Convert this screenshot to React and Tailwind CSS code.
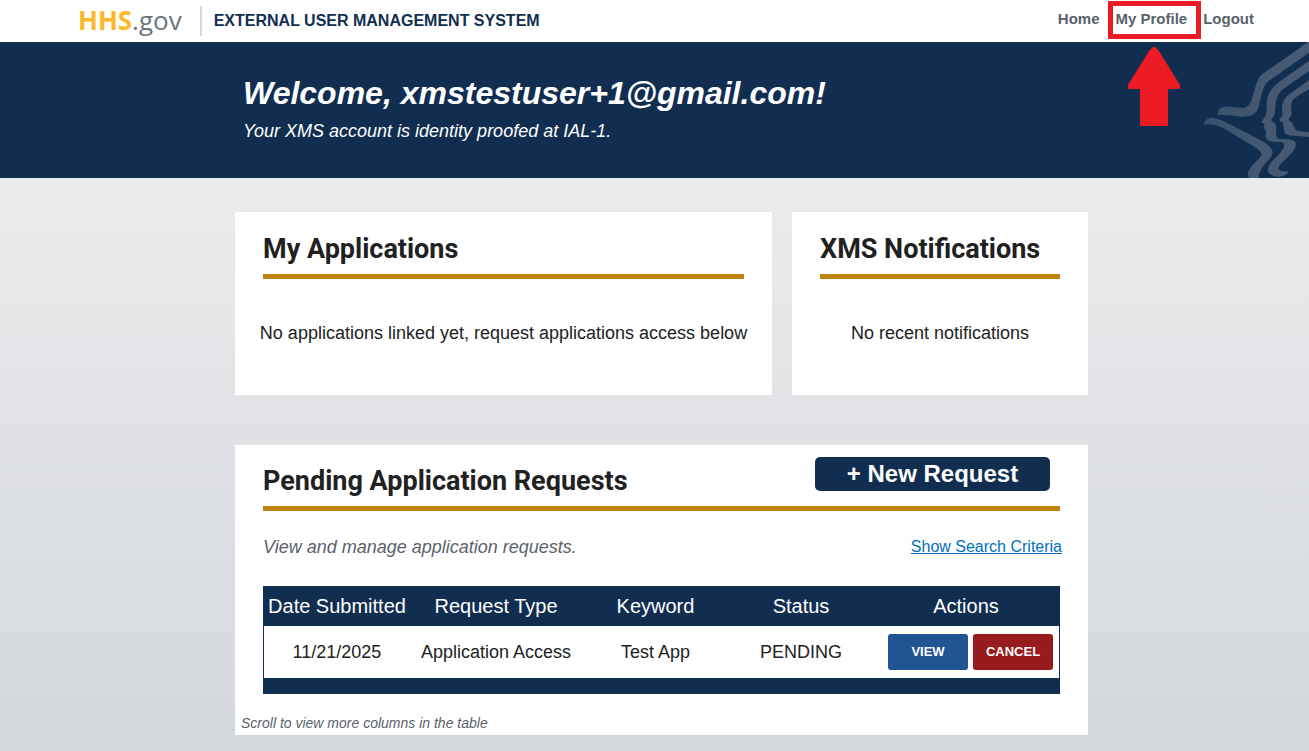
import React from "react";

const requests = [
  { date: "11/21/2025", type: "Application Access", keyword: "Test App", status: "PENDING" },
];

function Emblem() {
  return (
    <svg viewBox="0 6 357 408" className="absolute top-0 right-0 h-full w-[119px]" aria-hidden="true">
      <defs>
        <linearGradient id="emblem" x1="40" y1="0" x2="357" y2="0" gradientUnits="userSpaceOnUse">
          <stop offset="0" stopColor="#35506c" />
          <stop offset="0.5" stopColor="#445872" />
          <stop offset="1" stopColor="#485b77" />
        </linearGradient>
      </defs>
      <g fill="url(#emblem)">
        <path d="M357 3 L320 31 L218 101 Q205 112 199 132 L186 176 Q179 202 158 204 Q130 203 110 199 Q84 201 81 226 Q115 223 152 230 Q196 232 205 205 L215 162 Q222 132 237 122 L357 38 Z" />
        <path d="M357 63 L266 127 Q242 145 234 168 Q229 186 230 204 L228 225 L214 247 L224 253 L221 262 L228 273 L227 292 Q233 305 252 305 L272 306 Q289 310 280 325 Q274 338 252 358 Q227 382 236 399 Q248 411 270 410 Q290 407 297 394 Q274 397 266 388 Q264 378 278 366 L308 336 Q323 315 314 304 Q304 295 267 297 Q259 295 259 285 L257 253 L243 241 L254 224 L257 190 Q259 168 275 150 L357 93 Z" />
        <path d="M357 120 L304 158 Q280 175 276 196 L276 204 L278 224 L267 240 L279 249 L284 280 Q290 288 320 287 L357 291 V277 L326 274 Q316 273 313 262 L306 249 L295 239 L305 224 L303 198 Q304 182 317 172 L357 147 Z" />
        <path d="M41 254 Q42 236 65 233 Q84 234 104 245 L205 297 Q248 319 248 337 Q247 351 231 365 Q206 390 206 414 H177 Q167 395 189 374 Q209 356 215 344 Q214 334 194 321 L110 270 Q75 248 41 254 Z" />
      </g>
    </svg>
  );
}

function CardTitle({ children }) {
  return <h2 className="font-[Roboto,sans-serif] text-[27px] leading-8 font-bold">{children}</h2>;
}

function NoticeCard({ title, message }) {
  return (
    <section className="bg-white px-5 pt-[21px] pb-[50px]">
      <div className="mx-2 border-b-[5px] border-[#c2850c] pb-[9px]">
        <CardTitle>{title}</CardTitle>
      </div>
      <p className="pt-[42px] text-center text-lg leading-6 whitespace-nowrap">{message}</p>
    </section>
  );
}

export default function App() {
  return (
    <div className="flex min-h-screen flex-col bg-linear-to-b from-[#f1f2f2] to-[#d4d7dc] font-['Liberation_Sans',Arial,sans-serif] text-[#212121]">
      <header className="z-10 flex h-[42px] items-center justify-between bg-white pr-[55px] pl-[78px]">
        <div className="flex items-center">
          <a href="#hhs" className="pb-[3px] font-['Open_Sans',sans-serif] text-[26px] leading-8 text-[#6b747d]">
            <span className="font-bold text-[#fdb827]">HHS</span>.gov
          </a>
          <span className="ml-[18px] border-l-2 border-[#d6d7d9] py-1 pl-3 text-base leading-[22px] font-bold text-[#112e51]">
            EXTERNAL USER MANAGEMENT SYSTEM
          </span>
        </div>
        <nav className="flex items-center gap-4 pb-1 text-[15px] leading-5 font-bold text-[#5b616b]">
          <a href="#home">Home</a>
          <a href="#profile" className="relative">
            My Profile
            <span className="absolute -top-[8px] -right-[14px] -left-[8px] h-[38px] border-[5px] border-[#ed1c24]" />
            <svg viewBox="0 0 52 79" className="absolute top-[38px] left-3 h-[79px] w-[52px]" fill="#ed1c24" aria-hidden="true">
              <path d="M25 0 H27 L31 4 L52 38 V41 L51 42 H40 V78 L39 79 H13 L12 78 V42 H1 L0 41 V38 L21 4 Z" />
            </svg>
          </a>
          <a href="#logout">Logout</a>
        </nav>
      </header>

      <div className="relative h-[136px] bg-[#112e51] pl-[14px] text-white">
        <Emblem />
        <div className="mx-auto max-w-[853px] px-2 pt-[31px] italic">
          <h1 className="text-[32px] leading-10 font-bold">Welcome, xmstestuser+1@gmail.com!</h1>
          <p className="pt-[6px] text-lg leading-6">Your XMS account is identity proofed at IAL-1.</p>
        </div>
      </div>

      <main className="pt-[34px] pb-4 pl-[14px]">
        <div className="mx-auto flex max-w-[853px] flex-col gap-[50px]">
          <div className="grid grid-cols-[537fr_296fr] gap-5">
            <NoticeCard title="My Applications" message="No applications linked yet, request applications access below" />
            <NoticeCard title="XMS Notifications" message="No recent notifications" />
          </div>

          <section className="bg-white pt-3 pb-[2px]">
            <div className="mx-7 flex items-start justify-between border-b-[5px] border-[#c2850c] pb-[9px]">
              <div className="pt-2">
                <CardTitle>Pending Application Requests</CardTitle>
              </div>
              <button type="button" className="mr-[10px] h-[34px] w-[235px] rounded-[5px] bg-[#112e51] text-2xl leading-8 font-bold text-white">
                + New Request
              </button>
            </div>

            <div className="mr-[26px] ml-7 flex items-center justify-between pt-6">
              <p className="text-lg leading-6 text-[#5b616b] italic">View and manage application requests.</p>
              <a href="#search" className="text-base leading-6 text-[#0071bc] underline">Show Search Criteria</a>
            </div>

            <div className="mx-7 mt-[27px] border-x border-b-[16px] border-[#112e51]">
              <table className="w-full table-fixed border-collapse text-center">
                <colgroup>
                  <col className="w-[146px]" />
                  <col className="w-[172px]" />
                  <col className="w-[147px]" />
                  <col className="w-[144px]" />
                  <col />
                </colgroup>
                <thead className="bg-[#112e51] text-xl leading-6 whitespace-nowrap text-white">
                  <tr className="h-10">
                    <th className="font-normal">Date Submitted</th>
                    <th className="font-normal">Request Type</th>
                    <th className="font-normal">Keyword</th>
                    <th className="font-normal">Status</th>
                    <th className="font-normal">Actions</th>
                  </tr>
                </thead>
                <tbody className="text-lg leading-6">
                  {requests.map((r) => (
                    <tr key={r.date} className="h-[52px]">
                      <td>{r.date}</td>
                      <td>{r.type}</td>
                      <td>{r.keyword}</td>
                      <td>{r.status}</td>
                      <td>
                        <div className="flex justify-end gap-[5px] pr-[6px] text-[13px] font-bold text-white">
                          <button type="button" className="h-9 w-20 rounded-[3px] bg-[#205493]">VIEW</button>
                          <button type="button" className="h-9 w-20 rounded-[3px] bg-[#981b1e]">CANCEL</button>
                        </div>
                      </td>
                    </tr>
                  ))}
                </tbody>
              </table>
            </div>

            <p className="pt-[19px] pl-[6px] text-sm leading-5 text-[#5b616b] italic">Scroll to view more columns in the table</p>
          </section>
        </div>
      </main>
    </div>
  );
}
